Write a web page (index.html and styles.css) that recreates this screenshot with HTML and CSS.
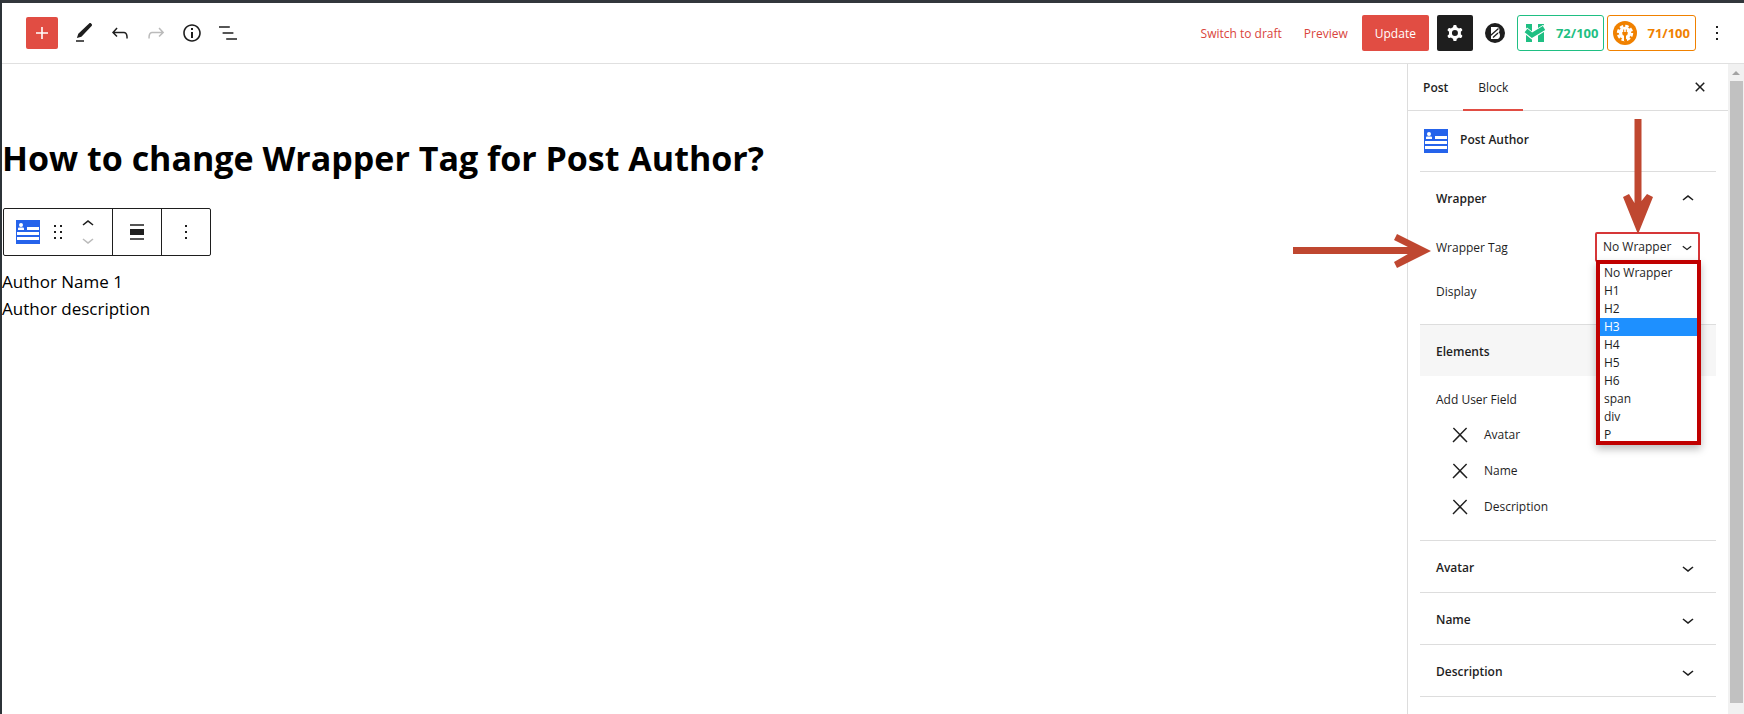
FILE: index.html
```html
<!DOCTYPE html>
<html lang="en">
<head>
<meta charset="utf-8">
<title>Edit Post</title>
<link rel="stylesheet" href="styles.css">
</head>
<body>
<div class="editor">
  <header class="topbar">
    <div class="tools">
      <button class="tool tool-add" aria-label="Add block"><svg class="icon" viewBox="0 0 24 24"><path d="M18 11.2h-5.2V6h-1.6v5.2H6v1.6h5.2V18h1.6v-5.2H18z"/></svg></button>
      <button class="tool" aria-label="Tools"><svg class="icon" viewBox="0 0 24 24"><path d="M19.6 4.9c.6-.6.6-1.400 0-2l-.5-.5c-.6-.6-1.400-.6-2 0L6.300 12.700 4.900 17.100l4.500-1.300L19.600 4.900zM4 19.300h8v1.500H4z"/></svg></button>
      <button class="tool" aria-label="Undo"><svg class="icon" viewBox="0 0 24 24"><path d="M18.3 11.700c-.6-.6-1.400-.9-2.300-.9H6.700l2.900-3.300-1.100-1-4.500 5L8.500 16l1-1-2.700-2.700H16c.5 0 .9.2 1.300.5 1 1 1 3.400 1 4.500v.3h1.500v-.2c0-1.500 0-4.300-1.500-5.700z"/></svg></button>
      <button class="tool" aria-label="Redo" disabled><svg class="icon" viewBox="0 0 24 24"><path d="M15.600 6.500l-1.100 1 2.900 3.300H8c-.9 0-1.700.3-2.300.9-1.400 1.500-1.400 4.200-1.400 5.600v.2h1.500v-.3c0-1.100 0-3.500 1-4.500.3-.3.7-.5 1.300-.5h9.200L14.500 15l1.100 1.100 4.600-4.600-4.600-5z"/></svg></button>
      <button class="tool" aria-label="Details"><svg class="icon" viewBox="0 0 24 24"><path d="M12 3.200c-4.800 0-8.800 3.900-8.800 8.800 0 4.800 3.900 8.800 8.800 8.800 4.800 0 8.800-3.900 8.800-8.800 0-4.800-4-8.800-8.800-8.800zm0 16c-4 0-7.200-3.300-7.200-7.200C4.800 8 8 4.800 12 4.800s7.200 3.300 7.200 7.200c0 4-3.200 7.200-7.200 7.200zM11 17h2v-6h-2v6zm0-8h2V7h-2v2z"/></svg></button>
      <button class="tool" aria-label="List view"><svg class="icon" viewBox="0 0 24 24"><path d="M13.800 5.200H3v1.500h10.800V5.200zm-3.600 12v1.500H21v-1.500H10.200zm7.200-6H6.600v1.500h10.800v-1.500z"/></svg></button>
    </div>
    <div class="actions">
      <button class="link-button">Switch to draft</button>
      <button class="link-button">Preview</button>
      <button class="update">Update</button>
      <button class="settings" aria-label="Settings"><svg class="icon" viewBox="0 0 24 24"><path fill-rule="evenodd" d="M10.289 4.836A1 1 0 0111.275 4h1.306a1 1 0 01.987.836l.244 1.466c.787.26 1.503.679 2.108 1.218l1.393-.522a1 1 0 011.216.437l.653 1.130a1 1 0 01-.23 1.273l-1.148.944a6.025 6.025 0 010 2.435l1.149.946a1 1 0 01.23 1.272l-.653 1.130a1 1 0 01-1.216.437l-1.394-.522c-.605.54-1.320.958-2.108 1.218l-.244 1.466a1 1 0 01-.987.836h-1.306a1 1 0 01-.986-.836l-.244-1.466a5.995 5.995 0 01-2.108-1.218l-1.394.522a1 1 0 01-1.217-.436l-.653-1.131a1 1 0 01.23-1.272l1.149-.946a6.026 6.026 0 010-2.435l-1.148-.944a1 1 0 01-.23-1.272l.653-1.131a1 1 0 011.217-.437l1.393.522a5.994 5.994 0 012.108-1.218l.244-1.466zM14.929 12a3 3 0 11-6 0 3 3 0 016 0z"/></svg></button>
      <button class="blocks" aria-label="Blocks settings"><svg class="blocks-icon" viewBox="0 0 20 20"><circle cx="10" cy="10" r="10" fill="#1e1e1e"/><path d="M6 4h5.500q3 0 3 3 0 1.500-1 2.500 1.500.8 1.500 2.900 0 3.600-4 3.600H6z" fill="#fff"/><path d="M5.500 12.500l8-7M8 14.500l5-4.500" stroke="#1e1e1e" stroke-width="1.300"/></svg></button>
      <button class="score score-green"><svg class="score-icon" viewBox="0 0 24 24"><path fill="currentColor" d="M3 3h6v18H3zM15 3h6v18h-6z"/><path d="M2 9l7 5.500L22 6.500" fill="none" stroke="#fff" stroke-width="6.500"/><path d="M3 9.500l6 4.700L21 7" fill="none" stroke="currentColor" stroke-width="4.500"/></svg>72/100</button>
      <button class="score score-orange"><svg class="score-icon" viewBox="0 0 24 24"><circle cx="12" cy="12" r="12" fill="currentColor"/><circle cx="12" cy="12" r="6.200" fill="#fff"/><circle cx="12" cy="12" r="7" fill="none" stroke="#fff" stroke-width="2.400" stroke-dasharray="3.500 2"/><path fill="currentColor" d="M9.300 11h.9V8.500h1V11h1.600V8.500h1V11h.9v1.500q0 2-1.700 2.300V20h-2v-5.200q-1.700-.3-1.700-2.300z"/></svg>71/100</button>
      <button class="more" aria-label="Options"><svg class="icon" viewBox="0 0 24 24"><path d="M13 19h-2v-2h2v2zm0-6h-2v-2h2v2zm0-6h-2V5h2v2z"/></svg></button>
    </div>
  </header>
  <div class="body">
    <main class="canvas">
      <h1 class="title">How to change Wrapper Tag for Post Author?</h1>
      <div class="block-toolbar" role="toolbar" aria-label="Block tools">
        <div class="group group-block">
          <button class="bt" aria-label="Post Author"><svg class="icon" viewBox="0 0 24 24"><path fill="#2563eb" d="M0 0h24v24H0z"/><g fill="#fff"><circle cx="5" cy="5" r="2"/><path d="M2 10V8.500q0-1 1-1h4q1 0 1 1V10zM11 7h12v3H11zM1 12h22v3H1zM1 17h22v3H1z"/></g></svg></button>
          <button class="bt" aria-label="Drag"><svg class="icon-drag" viewBox="0 0 18 18"><path d="M5 4h2V2H5v2zm6-2v2h2V2h-2zm-6 8h2V8H5v2zm6 0h2V8h-2v2zm-6 6h2v-2H5v2zm6 0h2v-2h-2v2z"/></svg></button>
          <div class="movers">
            <button class="mover" aria-label="Move up"><svg class="icon" viewBox="0 0 24 24"><path d="M6.500 12.400L12 8l5.500 4.400-.9 1.200L12 10l-4.500 3.600-1-1.200z"/></svg></button>
            <button class="mover" aria-label="Move down" disabled><svg class="icon" viewBox="0 0 24 24"><path d="M17.500 11.600L12 16l-5.500-4.400.9-1.200L12 14l4.500-3.600 1 1.200z"/></svg></button>
          </div>
        </div>
        <div class="group"><button class="bt" aria-label="Align"><svg class="icon" viewBox="0 0 24 24"><path d="M5 15h14V9H5v6zm0 4.800h14v-1.500H5v1.500zM5 4.200v1.500h14V4.200H5z"/></svg></button></div>
        <div class="group"><button class="bt" aria-label="Options"><svg class="icon" viewBox="0 0 24 24"><path d="M13 19h-2v-2h2v2zm0-6h-2v-2h2v2zm0-6h-2V5h2v2z"/></svg></button></div>
      </div>
      <p class="text">Author Name 1</p>
      <p class="text">Author description</p>
    </main>
    <aside class="sidebar">
      <div class="tabs">
        <button class="tab">Post</button>
        <button class="tab tab-active">Block</button>
        <button class="close" aria-label="Close settings"><svg class="icon" viewBox="0 0 24 24"><path d="M12 13.060l3.712 3.713 1.061-1.060L13.061 12l3.712-3.712-1.060-1.060L12 10.938 8.288 7.227l-1.061 1.060L10.939 12l-3.712 3.712 1.060 1.061L12 13.061z"/></svg></button>
      </div>
      <div class="panels">
        <div class="card"><svg class="icon" viewBox="0 0 24 24"><path fill="#2563eb" d="M0 0h24v24H0z"/><g fill="#fff"><circle cx="5" cy="5" r="2"/><path d="M2 10V8.500q0-1 1-1h4q1 0 1 1V10zM11 7h12v3H11zM1 12h22v3H1zM1 17h22v3H1z"/></g></svg><h2 class="card-title">Post Author</h2></div>
        <section class="panel">
          <button class="panel-head">Wrapper<svg class="icon" viewBox="0 0 24 24"><path d="M6.500 12.400L12 8l5.500 4.400-.9 1.200L12 10l-4.500 3.600-1-1.200z"/></svg></button>
          <div class="fields">
            <div class="field">
              <label for="wrapper-tag">Wrapper Tag</label>
              <div class="dropdown">
                <select id="wrapper-tag" class="select"><option>No Wrapper</option></select>
                <svg class="select-arrow" viewBox="0 0 24 24"><path d="M17.500 11.600L12 16l-5.500-4.400.9-1.200L12 14l4.500-3.600 1 1.200z"/></svg>
                <ul class="options" role="listbox" aria-label="Wrapper Tag">
                  <li>No Wrapper</li><li>H1</li><li>H2</li><li class="chosen">H3</li><li>H4</li><li>H5</li><li>H6</li><li>span</li><li>div</li><li>P</li>
                </ul>
              </div>
            </div>
            <div class="field">Display</div>
          </div>
        </section>
        <section class="panel">
          <button class="panel-head panel-head-hover">Elements</button>
          <p class="label">Add User Field</p>
          <ul class="user-fields">
            <li><button class="remove" aria-label="Remove Avatar"><svg class="icon" viewBox="0 0 24 24"><path d="M13 11.800l6.100-6.300-1-1-6.100 6.200-6.100-6.200-1 1 6.100 6.300-6.500 6.700 1 1 6.500-6.600 6.500 6.600 1-1z"/></svg></button>Avatar</li>
            <li><button class="remove" aria-label="Remove Name"><svg class="icon" viewBox="0 0 24 24"><path d="M13 11.800l6.100-6.300-1-1-6.100 6.200-6.100-6.200-1 1 6.100 6.300-6.500 6.700 1 1 6.500-6.600 6.500 6.600 1-1z"/></svg></button>Name</li>
            <li><button class="remove" aria-label="Remove Description"><svg class="icon" viewBox="0 0 24 24"><path d="M13 11.800l6.100-6.300-1-1-6.100 6.200-6.100-6.200-1 1 6.100 6.300-6.500 6.700 1 1 6.500-6.600 6.500 6.600 1-1z"/></svg></button>Description</li>
          </ul>
        </section>
        <section class="panel"><button class="panel-head">Avatar<svg class="icon" viewBox="0 0 24 24"><path d="M17.500 11.600L12 16l-5.500-4.400.9-1.200L12 14l4.500-3.600 1 1.200z"/></svg></button></section>
        <section class="panel"><button class="panel-head">Name<svg class="icon" viewBox="0 0 24 24"><path d="M17.500 11.600L12 16l-5.500-4.400.9-1.200L12 14l4.500-3.600 1 1.200z"/></svg></button></section>
        <section class="panel panel-last"><button class="panel-head">Description<svg class="icon" viewBox="0 0 24 24"><path d="M17.500 11.600L12 16l-5.500-4.400.9-1.200L12 14l4.500-3.600 1 1.200z"/></svg></button></section>
      </div>
      <svg class="arrow arrow-down" viewBox="0 0 32 114"><path d="M12.500 0h7v82L25 75l6 3-14.500 36h-1L1 78l6-3 5.500 9z"/></svg>
      <svg class="arrow arrow-right" viewBox="0 0 138 34"><path d="M0 13h115L101 6l3-6 34 17-34 17-3-6 14-8H0z"/></svg>
    </aside>
    <div class="scrollbar"><span class="scroll-up"></span><span class="thumb"></span></div>
  </div>
  <span class="edge-mark"></span>
</div>
</body>
</html>
```
FILE: styles.css
```css
* { box-sizing: border-box; }
body { margin: 0; background: #fff; color: #1e1e1e; font: 12px/18px "Open Sans", "Noto Sans", sans-serif; }
button { display: flex; align-items: center; justify-content: center; margin: 0; padding: 0; border: 0; background: none; color: inherit; font: inherit; cursor: pointer; }
h1, h2, p, ul { margin: 0; padding: 0; }
ul { list-style: none; }
svg { display: block; fill: currentColor; flex: none; }
.icon { width: 24px; height: 24px; }

.editor { position: relative; display: flex; flex-direction: column; height: 100vh; overflow: hidden; border-top: 3px solid #32373c; border-left: 2px solid #2c3338; }
.edge-mark { position: absolute; left: -2px; top: 91px; width: 2px; height: 35px; background: linear-gradient(#e14d43 10px, #fff 10px, #fff 24px, #e14d43 24px); }

.topbar { display: flex; flex: none; align-items: center; justify-content: space-between; height: 61px; padding: 0 12px 0 24px; border-bottom: 1px solid #e0e0e0; }
.tools { display: flex; gap: 4px; }
.tool { width: 32px; height: 32px; }
.tool:disabled { color: #bbb; }
.tool-add { margin-right: 6px; border-radius: 2px; background: #e14d43; color: #fff; }
.actions { display: flex; align-items: center; height: 36px; }
.link-button { height: 36px; margin-right: 22px; padding-top: 1px; color: #d9453c; }
.update { height: 36px; margin-right: 8px; padding: 1px 13px 0; border-radius: 2px; background: #e14d43; color: #fff; }
.link-button + .update { margin-left: -8px; }
.settings { width: 36px; height: 36px; border-radius: 2px; background: #1e1e1e; color: #fff; }
.blocks { width: 44px; height: 36px; }
.blocks-icon { width: 20px; height: 20px; }
.score { height: 36px; margin-right: 3px; padding: 0 5px; border: 1px solid; border-radius: 3px; font-size: 13px; font-weight: 700; }
.score-icon { width: 24px; height: 24px; }
.score-green { gap: 9px; color: #1fbf83; }
.score-orange { gap: 10px; color: #f08100; }
.more { width: 30px; height: 36px; margin-left: 3px; }

.body { display: flex; flex: 1; min-height: 0; }
.canvas { flex: 1; min-width: 0; padding-top: 68px; color: #000; }
.title { font-size: 34px; line-height: 52px; font-weight: 700; }
.block-toolbar { display: inline-flex; height: 48px; margin: 24px 0 12px 1px; border: 1px solid #1e1e1e; border-radius: 2px; background: #fff; color: #1e1e1e; }
.group { display: flex; align-items: center; padding: 0 12px; }
.group + .group { border-left: 1px solid #1e1e1e; }
.group-block { gap: 9px; }
.icon-drag { width: 18px; height: 18px; }
.movers { display: flex; flex-direction: column; width: 24px; }
.mover { height: 16px; }
.mover:disabled { color: #bbb; }
.text { font-size: 17px; line-height: 27px; }

.sidebar { position: relative; flex: none; width: 321px; border-left: 1px solid #ddd; }
.tabs { display: flex; height: 47px; border-bottom: 1px solid #ddd; }
.tab { padding: 2px 15px 0; color: #1e1e1e; font-weight: 600; }
.tab-active { border-bottom: 2px solid #e14d43; margin-bottom: -1px; font-weight: 500; }
.close { width: 48px; margin-left: auto; margin-right: 4px; }
.panels { padding: 0 12px; }
.card { display: flex; align-items: center; gap: 12px; height: 60px; padding: 0 4px; }
.card-title { padding-bottom: 2px; font-size: 12px; line-height: 18px; font-weight: 600; }
.panel { border-top: 1px solid #ddd; }
.panel-last { border-bottom: 1px solid #ddd; }
.panel-head { justify-content: space-between; width: 100%; height: 51px; padding: 2px 16px 0; font-weight: 600; }
.panel-head-hover { background: #f6f6f6; }
.fields { padding: 3px 16px 10px; }
.field { display: flex; align-items: center; justify-content: space-between; height: 44px; }
.dropdown { position: relative; width: 105px; margin-bottom: 2px; }
.select { display: block; appearance: none; width: 100%; height: 30px; padding: 0 6px; border: 2px solid #d63638; border-radius: 2px; background: #fff; color: #1e1e1e; font: inherit; }
.select-arrow { position: absolute; right: 3px; top: 5px; width: 20px; height: 20px; }
.options { position: absolute; z-index: 1; left: 1px; top: 28px; width: 105px; height: 185px; overflow: hidden; border: 4px solid #c00000; background: #fff; box-shadow: 0 4px 8px #0004; }
.options li { height: 18px; padding: 0 4px; }
.options .chosen { background: #1e90ff; color: #fff; }
.label { padding: 15px 16px 8px; }
.user-fields { padding: 0 28px 15px; }
.user-fields li { display: flex; align-items: center; gap: 12px; height: 36px; }
.arrow { position: absolute; z-index: 2; fill: #bf4730; }
.arrow-down { left: 214px; top: 55px; width: 32px; height: 114px; }
.arrow-right { left: -115px; top: 170px; width: 138px; height: 34px; }

.scrollbar { display: flex; flex: none; flex-direction: column; align-items: center; width: 16px; padding-bottom: 11px; background: #f1f1f1; }
.scroll-up { width: 0; margin: 7px 0 6px; border: 4px solid transparent; border-top: 0; border-bottom-color: #a3a3a3; }
.thumb { flex: 1; width: 13px; background: #c1c1c1; }
```
